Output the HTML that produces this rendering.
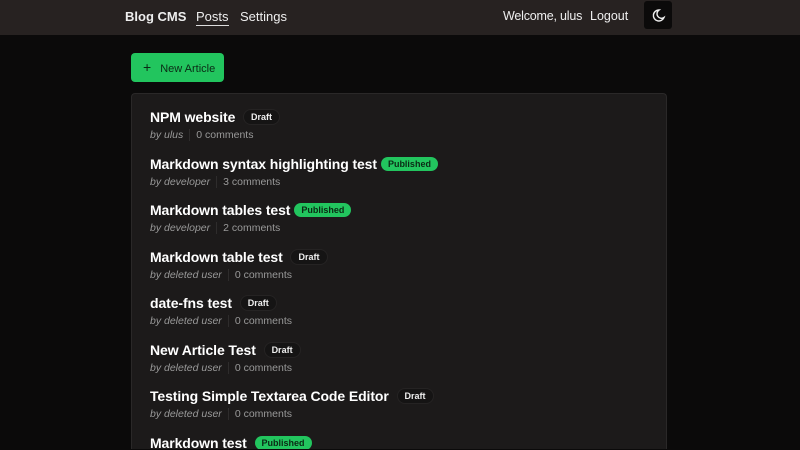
<!DOCTYPE html><html><head><style>
html,body{margin:0;width:800px;height:450px;overflow:hidden}
body{background:#0b0a0a;font-family:"Liberation Sans",sans-serif;color:#eee;position:relative}
.hd{height:35px;background:#272221;position:relative;font-size:13px}
.hd span{position:absolute;top:9px;white-space:nowrap}
.btn{position:absolute;left:131px;top:53px;width:93px;height:29px;background:#22c55e;border-radius:4px;color:#0b2a15;font-size:11px;line-height:29px}
.card{position:absolute;left:131px;top:93px;width:534px;height:355px;overflow:hidden;background:#1c1a1a;border:1px solid #2a2828;border-bottom:none;border-radius:4px 4px 0 0}
.it{position:absolute;left:18px}
.t{font-size:14px;font-weight:bold;color:#fff;white-space:nowrap;letter-spacing:-0.1px}
.b{display:inline-block;font-size:9px;font-weight:bold;padding:2px 7px;border-radius:8px;margin-left:4px;vertical-align:2px;letter-spacing:0}
.d{background:#151414;color:#eee;border:1px solid #252323}
.p{background:#22c55e;color:#0b2a15}
.m{font-size:10.5px;color:#999;margin-top:4px;white-space:nowrap}
.m i{margin-right:6px;padding-right:6px;border-right:1px solid #2e2c2c}
</style></head><body>
<div class="hd"><span style="left:125px;font-weight:bold">Blog CMS</span><span style="left:196px;border-bottom:1px solid #ddd;padding-bottom:1px">Posts</span><span style="left:240px">Settings</span><span style="left:503px;font-size:12.5px;letter-spacing:-0.2px">Welcome, ulus</span><span style="left:590px;font-size:12.5px">Logout</span>
<div style="position:absolute;left:644px;top:1px;width:28px;height:28px;background:#0b0a0a;border-radius:3px"><svg width="28" height="28" viewBox="0 0 28 28"><path d="M15 9a5.5 5.5 0 1 0 5 7.5A4.5 4.5 0 0 1 15 9z" fill="none" stroke="#eee" stroke-width="1.4"/></svg></div></div>
<div class="btn"><span style="margin-left:12px;font-size:14px">+</span><span style="margin-left:9px">New Article</span></div>
<div class="card">
<div class="it" style="top:15px"><div class="t">NPM website <span class="b d">Draft</span></div><div class="m"><i>by ulus</i>0 comments</div></div>
<div class="it" style="top:62px"><div class="t">Markdown syntax highlighting test<span class="b p">Published</span></div><div class="m"><i>by developer</i>3 comments</div></div>
<div class="it" style="top:108px"><div class="t">Markdown tables test<span class="b p">Published</span></div><div class="m"><i>by developer</i>2 comments</div></div>
<div class="it" style="top:155px"><div class="t">Markdown table test <span class="b d">Draft</span></div><div class="m"><i>by deleted user</i>0 comments</div></div>
<div class="it" style="top:201px"><div class="t">date-fns test <span class="b d">Draft</span></div><div class="m"><i>by deleted user</i>0 comments</div></div>
<div class="it" style="top:248px"><div class="t">New Article Test <span class="b d">Draft</span></div><div class="m"><i>by deleted user</i>0 comments</div></div>
<div class="it" style="top:294px"><div class="t">Testing Simple Textarea Code Editor <span class="b d">Draft</span></div><div class="m"><i>by deleted user</i>0 comments</div></div>
<div class="it" style="top:341px"><div class="t">Markdown test <span class="b p">Published</span></div></div>
</div>
</body></html>
